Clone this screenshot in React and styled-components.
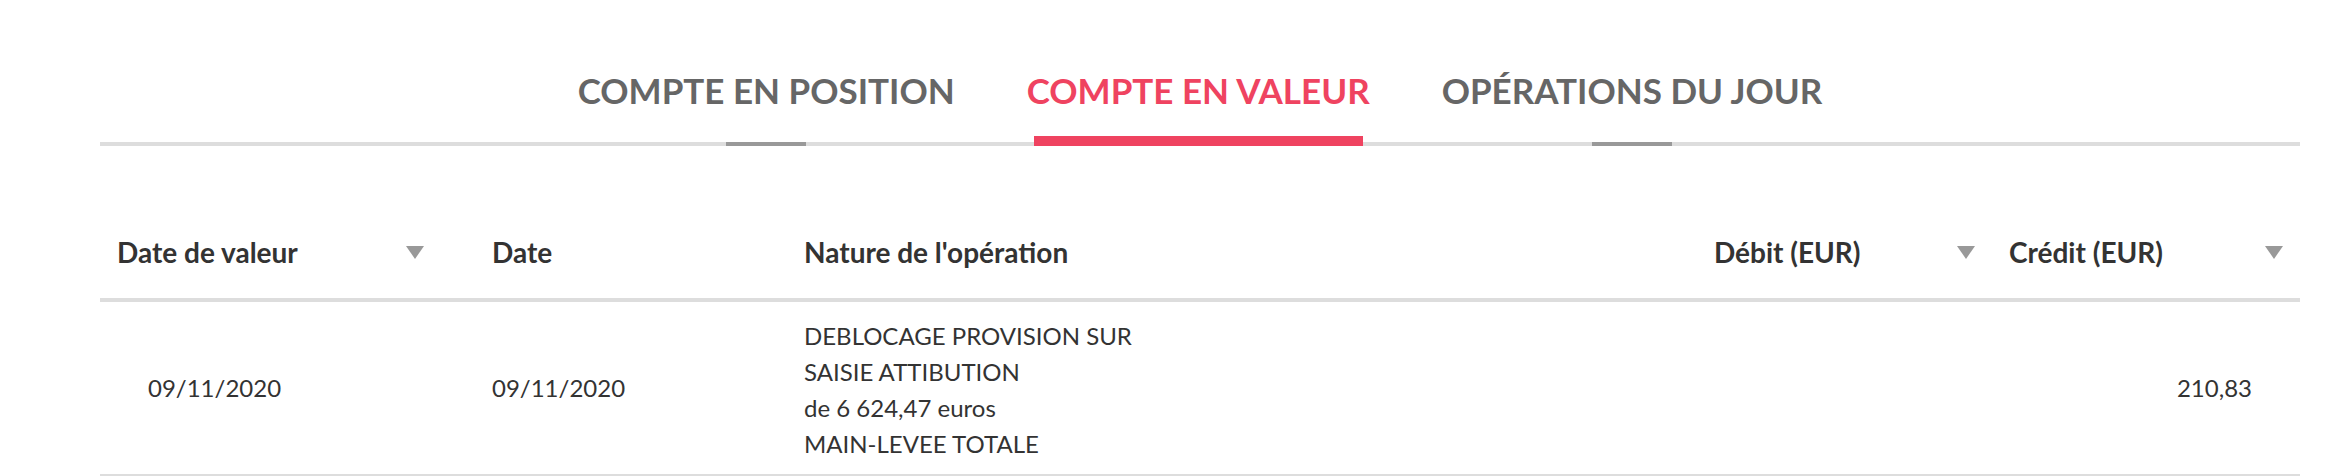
import React from 'react';
import styled, {createGlobalStyle, css} from "styled-components";

const GlobalStyle = createGlobalStyle`
    body {
        margin: 0;
        background: #fff;
        font-family: Lato, "Open Sans", "Liberation Sans", sans-serif;
        color: #333;
    }
`;

const Page = styled.div`
    margin: 0 52px 0 100px;
    width: 2200px;
`;

const TabBar = styled.div`
    display: flex;
    justify-content: center;
    padding-top: 66px;
    border-bottom: 4px solid #ddd;
`;

const Tab = styled.div`
    position: relative;
    padding: 0 36px 28px;
    font-size: 35px;
    line-height: 48px;
    font-weight: 700;
    color: ${({active}) => active ? '#ef4360' : '#666'};
    white-space: nowrap;
    cursor: pointer;

    &::after {
        content: '';
        position: absolute;
        bottom: -4px;
        ${({active}) => active
            ? css`
                left: 43px;
                right: 43px;
                height: 10px;
                background: #ef4360;
            `
            : css`
                left: 50%;
                width: 80px;
                margin-left: -40px;
                height: 4px;
                background: #999;
            `}
    }
`;

const Table = styled.div`
    margin-top: 60px;
`;

const Row = styled.div`
    display: grid;
    grid-template-columns: 375px 312px 910px 295px 308px;
    align-items: center;
    border-bottom: 4px solid #ddd;
`;

const HeaderRow = styled(Row)`
    height: 92px;
`;

const HeadCell = styled.div`
    display: flex;
    align-items: center;
    justify-content: space-between;
    padding: 0 ${({padRight}) => padRight || 17}px 0 17px;
    font-size: 28px;
    line-height: 36px;
    font-weight: 700;
    color: #333;
`;

const Cell = styled.div`
    padding: ${({padTop}) => padTop || 0}px ${({alignRight}) => alignRight ? 48 : 17}px ${({padBottom}) => padBottom || 0}px ${({padLeft}) => padLeft || 17}px;
    text-align: ${({alignRight}) => alignRight ? 'right' : 'left'};
    font-size: 24px;
    line-height: 36px;
    color: #333;
`;

const SortIcon = () => (
    <svg width="18" height="13" viewBox="0 0 18 13">
        <polygon points="0,0 18,0 9,13" fill="#999"/>
    </svg>
);

const tabs = ['COMPTE EN POSITION', 'COMPTE EN VALEUR', 'OPÉRATIONS DU JOUR'];

function App() {
    return (
        <>
            <GlobalStyle/>
            <Page>
                <TabBar>
                    {tabs.map((t, i) => (
                        <Tab key={t} active={i === 1}>{t}</Tab>
                    ))}
                </TabBar>
                <Table>
                    <HeaderRow>
                        <HeadCell padRight={51}>Date de valeur<SortIcon/></HeadCell>
                        <HeadCell>Date</HeadCell>
                        <HeadCell>Nature de l'opération</HeadCell>
                        <HeadCell>Débit (EUR)<SortIcon/></HeadCell>
                        <HeadCell>Crédit (EUR)<SortIcon/></HeadCell>
                    </HeaderRow>
                    <Row>
                        <Cell padLeft={48}>09/11/2020</Cell>
                        <Cell>09/11/2020</Cell>
                        <Cell padTop={16} padBottom={12}>
                            DEBLOCAGE PROVISION SUR<br/>
                            SAISIE ATTIBUTION<br/>
                            de 6 624,47 euros<br/>
                            MAIN-LEVEE TOTALE
                        </Cell>
                        <Cell/>
                        <Cell alignRight>210,83</Cell>
                    </Row>
                </Table>
            </Page>
        </>
    );
}

export default App;
